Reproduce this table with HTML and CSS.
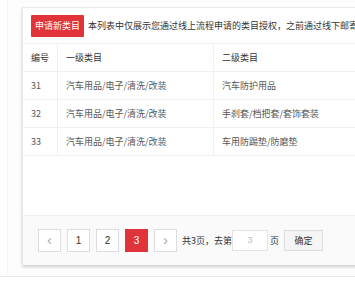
FILE: index.html
```html
<!DOCTYPE html>
<html lang="zh-CN">
<head>
<meta charset="utf-8">
<link rel="stylesheet" href="styles.css">
</head>
<body>
<div class="page">
  <div class="card">
    <div class="toolbar">
      <span class="btn-apply">申请新类目</span>
      <span class="notice">本列表中仅展示您通过线上流程申请的类目授权，之前通过线下邮寄资质申请的类目不在此展示</span>
    </div>
    <div class="table-wrap">
      <table class="cat-table">
        <thead>
          <tr><th class="c-id">编号</th><th class="c-l1">一级类目</th><th class="c-l2">二级类目</th></tr>
        </thead>
        <tbody>
          <tr><td class="c-id">31</td><td class="c-l1">汽车用品/电子/清洗/改装</td><td class="c-l2">汽车防护用品</td></tr>
          <tr><td class="c-id">32</td><td class="c-l1">汽车用品/电子/清洗/改装</td><td class="c-l2">手刹套/档把套/套饰套装</td></tr>
          <tr><td class="c-id">33</td><td class="c-l1">汽车用品/电子/清洗/改装</td><td class="c-l2">车用防踢垫/防磨垫</td></tr>
        </tbody>
      </table>
    </div>
    <div class="pager">
      <span class="pg pg-arrow">&lsaquo;</span>
      <span class="pg">1</span>
      <span class="pg">2</span>
      <span class="pg pg-active">3</span>
      <span class="pg pg-arrow pg-next">&rsaquo;</span>
      <span class="pg-text">共3页，去第</span>
      <span class="pg-input">3</span>
      <span class="pg-text">页</span>
      <span class="pg-ok">确定</span>
    </div>
  </div>
  <div class="bottom-line"></div>
</div>
</body>
</html>
```

FILE: styles.css
```css
html, body {
  margin: 0;
  padding: 0;
}
body {
  width: 355px;
  height: 281px;
  overflow: hidden;
  background: #ffffff;
  font-family: "Noto Sans CJK SC", "Noto Sans", sans-serif;
  font-size: 9px;
  color: #333;
}
.page {
  padding: 7px 0 0 14px;
  height: 275px;
  box-sizing: border-box;
  width: 362px;
  background: #fdfdfd;
  border-left: 1px solid #f6f6f6;
  margin-left: 7px;
  position: relative;
}
.card {
  width: 360px;
  height: 257px;
  background: #fff;
  border-top: 1px solid #ececec;
  border-left: 1px solid #e6e6e6;
  box-shadow: 0 2px 3px rgba(0,0,0,0.18);
  display: flex;
  flex-direction: column;
}
.toolbar {
  height: 36px;
  box-sizing: border-box;
  display: flex;
  align-items: center;
  padding-left: 8px;
  border-bottom: 1px solid #eeeeee;
  white-space: nowrap;
  overflow: hidden;
}
.btn-apply {
  display: inline-block;
  width: 53px;
  height: 22px;
  line-height: 22px;
  text-align: center;
  background: #e1333a;
  color: #fff;
  font-size: 9px;
  border-radius: 1px;
  flex: none;
}
.notice {
  margin-left: 4px;
  color: #333;
  font-size: 9px;
}
.table-wrap {
  height: 171px;
  border-bottom: 1px solid #f0f0f0;
}
.cat-table {
  border-collapse: collapse;
  width: 400px;
  table-layout: fixed;
}
.cat-table th, .cat-table td {
  height: 27px;
  padding: 0 0 0 8px;
  text-align: left;
  font-weight: normal;
  font-size: 9px;
  border-bottom: 1px solid #f0f0f0;
  border-right: 1px solid #f0f0f0;
  white-space: nowrap;
  color: #555;
}
.cat-table th {
  color: #333;
}
.c-id { width: 26px; }
.c-l1 { width: 147px; }
.pager {
  flex: 1;
  background: #fafafa;
  display: flex;
  align-items: center;
  padding: 0 0 0 15px;
}
.pg {
  display: inline-block;
  width: 21px;
  height: 21px;
  line-height: 21px;
  text-align: center;
  border: 1px solid #dddddd;
  background: #fff;
  color: #333;
  margin-right: 6px;
  font-family: "Liberation Sans", sans-serif;
  font-size: 10px;
}
.pg-arrow {
  color: #aaa;
  font-size: 15px;
  line-height: 19px;
}
.pg-active {
  background: #e1333a;
  border-color: #e1333a;
  color: #fff;
}
.pg-next {
  margin-right: 5px;
}
.pg-text {
  color: #333;
  font-size: 9px;
}
.pg-input {
  display: inline-block;
  width: 34px;
  height: 19px;
  line-height: 19px;
  border: 1px solid #e3e3e3;
  background: #fff;
  text-align: center;
  color: #bbb;
  margin: 0 2px 0 0;
  font-family: "Liberation Sans", sans-serif;
  font-size: 9px;
}
.pg-ok {
  display: inline-block;
  width: 37px;
  height: 19px;
  line-height: 19px;
  border: 1px solid #dcdcdc;
  background: #f5f5f5;
  text-align: center;
  margin-left: 5px;
  color: #333;
  font-size: 9px;
}
.bottom-line {
  position: absolute;
  left: -8px;
  right: 0;
  bottom: -2px;
  border-top: 1px solid #e8e8e8;
}
```
